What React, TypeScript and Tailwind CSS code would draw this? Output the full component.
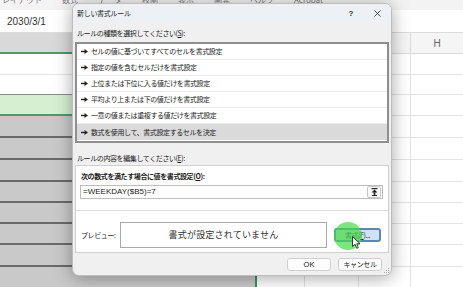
import React from 'react'

const jp = "font-['Noto_Sans_CJK_JP','Noto_Sans',sans-serif]"

const ruleTypes = [
  'セルの値に基づいてすべてのセルを書式設定',
  '指定の値を含むセルだけを書式設定',
  '上位または下位に入る値だけを書式設定',
  '平均より上または下の値だけを書式設定',
  '一意の値または重複する値だけを書式設定',
  '数式を使用して、書式設定するセルを決定',
]

// body rows of the sheet: height + style of the selected block on the left
const sheetRows = [
  { h: 'h-[21px]', left: 'bg-white border-b border-[#e4e4e4]' },
  { h: 'h-[20px]', left: 'bg-white border-b border-[#8c8c8c]' },
  { h: 'h-[21px]', left: 'bg-[#d6efd1] border-b-2 border-[#4f9a6a]' },
  { h: 'h-[22px]', left: 'bg-[#c9c9c9] border-b-2 border-[#6a6a6a]' },
  { h: 'h-[22px]', left: 'bg-[#c9c9c9] border-b-2 border-[#6a6a6a]' },
  { h: 'h-[22px]', left: 'bg-[#c9c9c9] border-b-2 border-[#6a6a6a]' },
  { h: 'h-[21px]', left: 'bg-[#c9c9c9] border-b-2 border-[#6a6a6a]' },
  { h: 'h-[21px]', left: 'bg-[#c9c9c9] border-b-2 border-[#6a6a6a]' },
  { h: 'h-[21px]', left: 'bg-[#c9c9c9] border-b-2 border-[#6a6a6a]' },
  { h: 'h-[22px]', left: 'bg-[#c9c9c9] border-b-2 border-[#6a6a6a]' },
  { h: 'h-[22px]', left: 'bg-[#c9c9c9] border-b-2 border-[#6a6a6a]' },
]

function Arrow() {
  return (
    <svg width="7" height="5" viewBox="0 0 7 5" className="shrink-0">
      <rect x="0" y="1.8" width="4" height="1.4" fill="#222" />
      <path d="M3.5 0 L7 2.5 L3.5 5 Z" fill="#222" />
    </svg>
  )
}

function U({ children }: { children: React.ReactNode }) {
  return <span className="underline underline-offset-[1px]">{children}</span>
}

function Sheet() {
  return (
    <div className="flex flex-col">
      {/* ribbon, cut off at the top */}
      <div className="h-[10px] bg-[#f3f3f3] overflow-hidden">
        <div className={`${jp} -mt-[6px] flex gap-[20px] pl-[2px] text-[8px] text-[#777] whitespace-nowrap`}>
          <span>レイアウト</span><span>数式</span><span>データ</span><span>校閲</span><span>表示</span><span>開発</span><span>ヘルプ</span><span>Acrobat</span>
        </div>
      </div>
      {/* formula bar */}
      <div className="h-[23px] bg-white border-b border-[#dcdcdc] flex items-center pl-[7px] font-['Liberation_Sans',sans-serif] text-[10px] text-[#333]">
        2030/3/1
      </div>
      {/* column headers */}
      <div className="h-[21px] flex">
        <div className="w-[257px] shrink-0 bg-[#d9d9d9] border-b-2 border-[#4f9a6a]" />
        <div className="w-[48px] shrink-0 bg-[#f5f5f5] border-r border-b border-[#dadada]" />
        <div className="w-[54px] shrink-0 bg-[#f5f5f5] border-r border-b border-[#dadada]" />
        <div className="w-[52px] shrink-0 bg-[#f5f5f5] border-r border-b border-[#dadada]" />
        <div className="flex-1 bg-[#f5f5f5] border-b border-[#dadada] flex items-center justify-center font-['Liberation_Sans',sans-serif] text-[10px] text-[#666]">H</div>
      </div>
      {sheetRows.map((r, i) => (
        <div key={i} className={`${r.h} flex`}>
          <div className={`w-[255px] shrink-0 ${r.left}`} />
          <div className="w-[2px] shrink-0 bg-[#3f8f5f]" />
          <div className="w-[48px] shrink-0 bg-white border-r border-b border-[#e2e2e2]" />
          <div className="w-[54px] shrink-0 bg-white border-r border-b border-[#e2e2e2]" />
          <div className="w-[52px] shrink-0 bg-white border-r border-b border-[#e2e2e2]" />
          <div className="flex-1 bg-white border-b border-[#e2e2e2]" />
        </div>
      ))}
    </div>
  )
}

function Dialog() {
  return (
    <div className={`${jp} absolute left-[72px] top-[3px] w-[320px] h-[273px] rounded-[7px] border border-[#bdbdbd] bg-[#f0f0f0] shadow-[0_2px_18px_rgba(0,0,0,0.35)] overflow-hidden flex flex-col text-[#1b1b1b]`}>
      {/* title bar */}
      <div className="h-[19px] shrink-0 bg-[#edf1f5] flex items-center pl-[4px] pr-[10px] text-[7px] tracking-[-0.3px]">
        <span>新しい書式ルール</span>
        <span className="ml-auto font-['Liberation_Sans',sans-serif] font-bold text-[8px] text-[#333]">?</span>
        <svg width="7" height="7" viewBox="0 0 7 7" className="ml-[21px]">
          <path d="M0.5 0.5 L6.5 6.5 M6.5 0.5 L0.5 6.5" stroke="#333" strokeWidth="0.9" />
        </svg>
      </div>

      <div className="flex flex-col px-[1px] text-[7px] tracking-[-0.4px]">
        <div className="mt-[4px] h-[12px] flex items-center pl-[3px]">
          ルールの種類を選択してください(<U>S</U>):
        </div>
        {/* rule type list */}
        <div className="mt-[3px] mx-[1px] h-[101px] border-2 border-[#8f8f8f] bg-white flex flex-col">
          {ruleTypes.map((t, i) => (
            <div
              key={t}
              className={`h-[16px] shrink-0 flex items-center gap-[3px] pl-[4px] ${i === ruleTypes.length - 1 ? 'bg-[#dadada]' : 'border-b border-[#ededed]'}`}
            >
              <Arrow />
              <span>{t}</span>
            </div>
          ))}
        </div>

        <div className="mt-[9px] h-[12px] flex items-center pl-[3px]">
          ルールの内容を編集してください(<U>E</U>):
        </div>
        {/* rule description group */}
        <div className="mt-[1px] mx-[1px] h-[88px] border border-[#d0d0d0] bg-white flex flex-col">
          <div className="mt-[4px] h-[12px] flex items-center pl-[5px] font-bold">
            次の数式を満たす場合に値を書式設定(<U>O</U>):
          </div>
          <div className="mt-[3px] ml-[4px] mr-[5px] h-[14px] border border-[#bdbdbd] bg-white flex items-center">
            <span className="flex-1 pl-[2px] font-['Liberation_Sans',sans-serif] text-[8px] tracking-normal">=WEEKDAY($B5)=7</span>
            <div className="w-[14px] h-[12px] mr-[1px] border border-[#c9c9c9] rounded-[2px] bg-[#fbfbfb] flex items-center justify-center">
              <svg width="7" height="8" viewBox="0 0 7 8">
                <rect x="0.5" y="0" width="6" height="1.2" fill="#222" />
                <path d="M3.5 1.6 L6.5 4.6 L0.5 4.6 Z" fill="#222" />
                <rect x="2.6" y="4.4" width="1.8" height="2.4" fill="#222" />
                <rect x="1" y="7" width="5" height="1" fill="#222" />
              </svg>
            </div>
          </div>
          <div className="mt-[11px] h-px bg-[#dcdcdc]" />
          <div className="mt-[11px] flex items-center pl-[5px] pr-[6px]">
            <span className="w-[39px] shrink-0">プレビュー:</span>
            <div className="w-[207px] h-[26px] border border-[#a9a9a9] bg-white flex items-center justify-center text-[9px] tracking-[0.2px] text-[#333]">
              書式が設定されていません
            </div>
            <div className="ml-[7px] w-[47px] h-[14px] rounded-[3px] border-2 border-[#5a87b8] bg-[#cfe2f3] flex items-center justify-center text-[7px]">
              書式(<U>F</U>)...
            </div>
          </div>
        </div>

        {/* OK / cancel */}
        <div className="mt-[5px] flex justify-end gap-[7px] pr-[8px]">
          <div className="w-[44px] h-[13px] rounded-[3px] border border-[#cfcfcf] bg-[#fdfdfd] flex items-center justify-center font-['Liberation_Sans',sans-serif] text-[7.5px] tracking-normal">OK</div>
          <div className="w-[44px] h-[13px] rounded-[3px] border border-[#cfcfcf] bg-[#fdfdfd] flex items-center justify-center">キャンセル</div>
        </div>
      </div>

      {/* resize grip */}
      <svg width="6" height="6" viewBox="0 0 6 6" className="absolute right-[1px] bottom-[1px]">
        <rect x="4" y="0" width="1" height="1" fill="#aaa" />
        <rect x="2" y="2" width="1" height="1" fill="#aaa" />
        <rect x="4" y="2" width="1" height="1" fill="#aaa" />
        <rect x="0" y="4" width="1" height="1" fill="#aaa" />
        <rect x="2" y="4" width="1" height="1" fill="#aaa" />
        <rect x="4" y="4" width="1" height="1" fill="#aaa" />
      </svg>
    </div>
  )
}

export default function App() {
  return (
    <div className="relative w-[463px] h-[287px] overflow-hidden bg-white">
      <Sheet />
      <Dialog />
      {/* click highlight + mouse pointer */}
      <div className="absolute left-[334px] top-[222px] w-[28px] h-[28px] rounded-full bg-[#45dc45]/70" />
      <svg width="9" height="13" viewBox="0 0 9 13" className="absolute left-[352px] top-[236px]">
        <path d="M0.5 0.5 L0.5 10.5 L3 8.3 L4.8 12.3 L6.3 11.6 L4.6 7.8 L8 7.8 Z" fill="#fff" stroke="#111" strokeWidth="0.8" strokeLinejoin="round" />
      </svg>
    </div>
  )
}
